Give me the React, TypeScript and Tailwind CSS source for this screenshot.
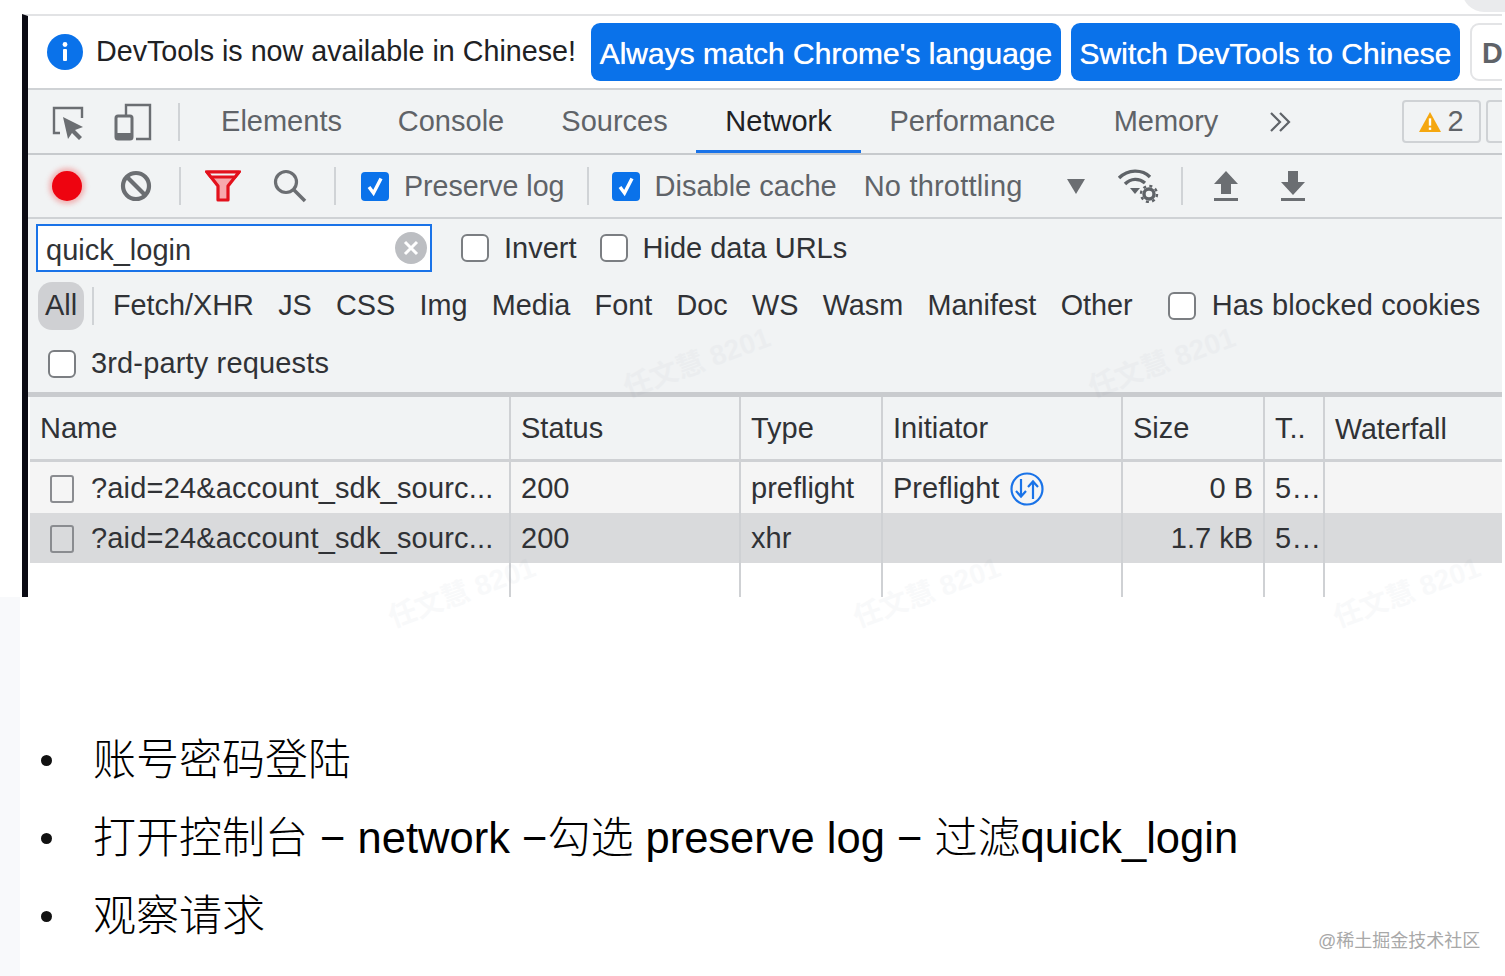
import React from "react";

const sans = "font-['Liberation_Sans',Arial,'Noto_Sans_CJK_SC',sans-serif]";

function Check({ on = false, className = "" }: { on?: boolean; className?: string }) {
  return on ? (
    <span className={`flex h-[29px] w-[28px] shrink-0 items-center justify-center rounded-[4px] bg-[#0a72ea] ${className}`}>
      <svg width="18" height="22" viewBox="0 0 18 22" fill="none">
        <path d="M3 12 L7.5 18 L15 3.5" stroke="white" strokeWidth="3.4" />
      </svg>
    </span>
  ) : (
    <span className={`block h-[28px] w-[28px] shrink-0 rounded-[6px] border-2 border-[#7b7e82] bg-white ${className}`} />
  );
}

function Divider({ className = "" }: { className?: string }) {
  return <span className={`block h-[38px] w-[2px] shrink-0 bg-[#d0d3d6] ${className}`} />;
}

function Tab({ label, active = false, w }: { label: string; active?: boolean; w: string }) {
  return (
    <div className={`flex h-full shrink-0 items-center justify-center ${w} ${active ? "border-b-[3px] border-[#1a73e8] pt-[3px] text-[#202124]" : "text-[#5f6368]"}`}>
      {label}
    </div>
  );
}

function Cell({ w, children, right = false }: { w: string; children?: React.ReactNode; right?: boolean }) {
  return (
    <div className={`flex h-full shrink-0 items-center overflow-hidden whitespace-nowrap border-r-2 border-[#cfd1d4] px-[10px] pt-[2px] ${w} ${right ? "justify-end" : ""}`}>
      {children}
    </div>
  );
}

const widths = ["w-[481px]", "w-[230px]", "w-[142px]", "w-[240px]", "w-[142px]", "w-[60px]"];

function Row({ cells, bg, h }: { cells: React.ReactNode[]; bg: string; h: string }) {
  return (
    <div className={`flex text-[#303236] ${bg} ${h}`}>
      {cells.map((c, i) => (
        <Cell key={i} w={widths[i]} right={i === 4}>{c}</Cell>
      ))}
      <div className="flex-1" />
    </div>
  );
}

function NameCell() {
  return (
    <>
      <span className="ml-[10px] mr-[17px] block h-[28px] w-[24px] shrink-0 rounded-[3px] border-2 border-[#8a8c90]" />
      <span className="tracking-[0.18px]">?aid=24&account_sdk_sourc...</span>
    </>
  );
}

function Watermark({ className }: { className: string }) {
  return (
    <span className={`pointer-events-none absolute rotate-[-20deg] whitespace-nowrap text-[28px] font-bold text-[#8a93a5] opacity-[0.05] ${className}`}>
      任文慧 8201
    </span>
  );
}

const Zh = ({ children }: { children: React.ReactNode }) => (
  <span className="text-[43px] font-light">{children}</span>
);

const Dots = () => <span className="tracking-[1.5px]">5...</span>;

export default function App() {
  return (
    <div className={`relative h-[976px] w-[1505px] overflow-hidden bg-white ${sans}`}>
      <span className="absolute left-[1462px] top-[-32px] block h-[44px] w-[70px] rounded-full bg-[#eaebed]" />
      <div className="h-[14px]" />
      <div className="relative ml-[22px] flex h-[583px] w-[1480px] flex-col overflow-hidden border-l-[6px] border-[#0b0b14] border-t-2 border-t-[#e2e3e5] text-[29px]">
        {/* info bar */}
        <div className="flex h-[72px] shrink-0 items-center bg-white pl-[19px] text-[28.7px]">
          <svg width="36" height="36" viewBox="0 0 36 36" className="mr-[13px] shrink-0">
            <circle cx="18" cy="18" r="18" fill="#0a72ea" />
            <circle cx="18" cy="10.5" r="2.4" fill="white" />
            <rect x="16" y="15" width="4" height="12" rx="1" fill="white" />
          </svg>
          <span className="whitespace-nowrap text-[#202124]">DevTools is now available in Chinese!</span>
          <span className="ml-[15px] flex h-[58px] w-[470px] shrink-0 items-center justify-center rounded-[9px] bg-[#0a72ea] pt-[3px] text-[30px] whitespace-nowrap text-white [text-shadow:0_0_0.7px_white]">Always match Chrome's language</span>
          <span className="ml-[10px] flex h-[58px] w-[389px] shrink-0 items-center justify-center rounded-[9px] bg-[#0a72ea] pt-[3px] text-[30px] whitespace-nowrap text-white [text-shadow:0_0_0.7px_white]">Switch DevTools to Chinese</span>
          <span className="ml-[10px] flex h-[58px] w-[60px] shrink-0 items-center rounded-[9px] border-2 border-[#e3e4e6] pl-[10px] pt-[3px] font-bold text-[#5f6368]">D</span>
        </div>

        {/* tabs */}
        <div className="flex h-[67px] shrink-0 items-center border-y-2 border-[#cfd2d5] bg-[#f1f3f4] border-b-[#c7cacd]">
          <svg width="34" height="34" viewBox="0 0 34 34" fill="none" className="ml-[24px] mt-[2px] shrink-0">
            <path d="M8 27 H2 V2 H30 V12" stroke="#6b6e72" strokeWidth="2.4" />
            <path d="M11 11 L31 21 L23 24 L30 31 L27 34 L20 27 L16 33 Z" fill="#6b6e72" />
          </svg>
          <svg width="38" height="38" viewBox="0 0 38 38" fill="none" className="ml-[28px] shrink-0">
            <path d="M12 13 V2 H36 V36 H22" stroke="#6b6e72" strokeWidth="2.4" />
            <rect x="2" y="13" width="16" height="23" rx="2" stroke="#6b6e72" strokeWidth="3" />
            <rect x="2" y="30" width="16" height="6" fill="#6b6e72" />
          </svg>
          <Divider className="ml-[26px]" />
          <div className="ml-[14px] flex h-full">
            <Tab label="Elements" w="w-[175px]" />
            <Tab label="Console" w="w-[164px]" />
            <Tab label="Sources" w="w-[163px]" />
            <Tab label="Network" active w="w-[165px]" />
            <Tab label="Performance" w="w-[223px]" />
            <Tab label="Memory" w="w-[164px]" />
          </div>
          <svg width="22" height="22" viewBox="0 0 22 22" fill="none" className="ml-[21px] shrink-0" stroke="#5f6368" strokeWidth="2.2">
            <path d="M2 2 L11 11 L2 20" />
            <path d="M11 2 L20 11 L11 20" />
          </svg>
          <div className="ml-[111px] flex h-[43px] w-[79px] shrink-0 items-center justify-center gap-[6px] rounded-[4px] border-2 border-[#cfd2d5] text-[#5f6368]">
            <svg width="22" height="22" viewBox="0 0 24 24">
              <path d="M12 1 L24 23 H0 Z" fill="#f5a70f" />
              <rect x="10.7" y="8" width="2.6" height="8" fill="#fff" />
              <rect x="10.7" y="18" width="2.6" height="2.6" fill="#fff" />
            </svg>
            2
          </div>
          <div className="ml-[5px] h-[43px] w-[20px] shrink-0 rounded-l-[4px] border-2 border-[#cfd2d5]" />
        </div>

        {/* network toolbar */}
        <div className="flex h-[64px] shrink-0 items-center border-b-2 border-[#cfd2d5] bg-[#f1f3f4] text-[#5f6368]">
          <span className="ml-[24px] block h-[30px] w-[30px] shrink-0 rounded-full bg-[#ee0410] shadow-[0_0_5px_3px_rgba(240,60,60,0.35)]" />
          <svg width="32" height="32" viewBox="0 0 32 32" fill="none" stroke="#6b6e72" strokeWidth="4.2" className="ml-[38px] shrink-0">
            <circle cx="16" cy="16" r="13" />
            <path d="M7 7 L25 25" />
          </svg>
          <Divider className="ml-[27px]" />
          <svg width="36" height="32" viewBox="0 0 36 32" className="ml-[24px] shrink-0">
            <path d="M2 2 H34 L23 16 V30 H13 V16 Z" fill="#f7a9ad" stroke="#e3111c" strokeWidth="3.2" strokeLinejoin="round" />
            <path d="M2 2 H34 L30 7 H6 Z" fill="#f1f3f4" stroke="#e3111c" strokeWidth="3" />
          </svg>
          <svg width="34" height="34" viewBox="0 0 34 34" fill="none" stroke="#6b6e72" strokeWidth="3.2" className="ml-[32px] shrink-0">
            <circle cx="13" cy="13" r="10.5" />
            <path d="M20.5 20.5 L32 32" strokeWidth="3.6" />
          </svg>
          <Divider className="ml-[27px]" />
          <Check on className="ml-[25px]" />
          <span className="ml-[15px] pt-[1px] text-[28.6px] whitespace-nowrap">Preserve log</span>
          <Divider className="ml-[22px]" />
          <Check on className="ml-[23px]" />
          <span className="ml-[15px] pt-[1px] whitespace-nowrap">Disable cache</span>
          <span className="ml-[27px] pt-[1px] whitespace-nowrap tracking-[0.2px]">No throttling</span>
          <svg width="18" height="15" viewBox="0 0 18 15" className="ml-[44px] shrink-0">
            <path d="M0 0 H18 L9 15 Z" fill="#6b6e72" />
          </svg>
          <svg width="42" height="34" viewBox="0 0 42 34" className="ml-[32px] shrink-0" fill="none">
            <path d="M2 9 C11 0 25 0 33 8" stroke="#5f6368" strokeWidth="3.4" />
            <path d="M8 15 C14 9 22 9 28 14" stroke="#5f6368" strokeWidth="3.4" />
            <path d="M13 19 H23 L18 25 Z" fill="#5f6368" />
            <circle cx="32" cy="25" r="5" stroke="#5f6368" strokeWidth="3.4" />
            <circle cx="32" cy="25" r="8" stroke="#5f6368" strokeWidth="2.4" strokeDasharray="3 3.3" />
          </svg>
          <Divider className="ml-[22px]" />
          <svg width="26" height="32" viewBox="0 0 26 32" className="ml-[30px] shrink-0">
            <path d="M13 1 L25 14 H18 V24 H8 V14 H1 Z" fill="#6b6e72" />
            <rect x="1" y="28" width="24" height="3" fill="#6b6e72" />
          </svg>
          <svg width="26" height="32" viewBox="0 0 26 32" className="ml-[41px] shrink-0">
            <path d="M8 1 H18 V12 H25 L13 25 L1 12 H8 Z" fill="#6b6e72" />
            <rect x="1" y="28" width="24" height="3" fill="#6b6e72" />
          </svg>
        </div>

        {/* filters */}
        <div className="flex h-[178px] shrink-0 flex-col border-b-[5px] border-[#c9cbce] bg-[#f1f3f4] text-[#303236]">
          <div className="flex h-[58px] shrink-0 items-center pl-[8px]">
            <div className="flex h-[48px] w-[396px] shrink-0 items-center justify-between border-2 border-[#1a73e8] bg-white pl-[8px] pr-[3px] text-[#303236]">
              <span className="pt-[5px]">quick_login</span>
              <span className="flex h-[32px] w-[32px] items-center justify-center rounded-full bg-[#bcbec2]">
                <svg width="18" height="18" viewBox="0 0 18 18" stroke="white" strokeWidth="3"><path d="M3 3 L15 15 M15 3 L3 15" /></svg>
              </span>
            </div>
            <Check className="ml-[29px]" />
            <span className="ml-[15px] pt-[2px]">Invert</span>
            <Check className="ml-[23px]" />
            <span className="ml-[15px] pt-[2px]">Hide data URLs</span>
          </div>
          <div className="flex h-[58px] shrink-0 items-center pl-[10px]">
            <span className="flex h-[48px] w-[46px] shrink-0 items-center justify-center rounded-[14px] bg-[#cfd0d3]">All</span>
            <span className="ml-[8px] block h-[38px] w-[2px] bg-[#d0d3d6]" />
            <div className="ml-[19px] flex gap-[24.3px] whitespace-nowrap text-[28.8px]">
              <span>Fetch/XHR</span><span>JS</span><span>CSS</span><span>Img</span><span>Media</span><span>Font</span><span>Doc</span><span>WS</span><span>Wasm</span><span>Manifest</span><span>Other</span>
            </div>
            <Check className="ml-[35px]" />
            <span className="ml-[16px] whitespace-nowrap tracking-[0.15px]">Has blocked cookies</span>
          </div>
          <div className="flex flex-1 items-center pl-[20px]">
            <Check />
            <span className="ml-[15px] tracking-[0.15px]">3rd-party requests</span>
          </div>
        </div>

        {/* table */}
        <div className="ml-[2px] flex flex-1 flex-col bg-white">
          <div className="flex h-[65px] shrink-0 border-b-[3px] border-[#cfd1d4] bg-[#f1f3f4] text-[#303236]">
            {["Name", "Status", "Type", "Initiator", "Size", "T.."].map((h, i) => (
              <Cell key={h} w={widths[i]}>{h}</Cell>
            ))}
            <div className="flex items-center pl-[10px] pt-[2px] text-[28.6px]">Waterfall</div>
          </div>
          <Row
            h="h-[51px]"
            bg="bg-[#f5f5f5]"
            cells={[
              <NameCell />,
              "200",
              "preflight",
              <>
                Preflight
                <svg width="36" height="36" viewBox="0 0 36 36" fill="none" stroke="#1a73e8" strokeWidth="2.2" className="ml-[10px] shrink-0">
                  <circle cx="18" cy="18" r="15.5" />
                  <path d="M12 8 V25 M7 20 L12 25.5 L17 20" />
                  <path d="M24 28 V11 M19 16 L24 10.5 L29 16" />
                </svg>
              </>,
              "0 B",
              <Dots />,
            ]}
          />
          <Row h="h-[50px]" bg="bg-[#d9dadc]" cells={[<NameCell />, "200", "xhr", "", "1.7 kB", <Dots />]} />
          <Row h="flex-1" bg="bg-white" cells={["", "", "", "", "", ""]} />
        </div>
      </div>

      {/* notes */}
      <div className="flex h-[379px]">
        <div className="w-[20px] shrink-0 bg-[#f8f9fb]" />
        <ul className="flex flex-col gap-[22px] pl-[21px] pt-[135px] text-[43.5px] leading-[56px] text-black">
          <li className="flex items-center whitespace-nowrap">
            <span className="mr-[41px] block h-[11px] w-[11px] shrink-0 rounded-full bg-[#111]" />
            <Zh>账号密码登陆</Zh>
          </li>
          <li className="flex items-center whitespace-pre">
            <span className="mr-[41px] block h-[11px] w-[11px] shrink-0 rounded-full bg-[#111]" />
            <Zh>打开控制台</Zh>
            {" − network −"}
            <Zh>勾选</Zh>
            {" preserve log − "}
            <Zh>过滤</Zh>
            {"quick_login"}
          </li>
          <li className="flex items-center whitespace-nowrap">
            <span className="mr-[41px] block h-[11px] w-[11px] shrink-0 rounded-full bg-[#111]" />
            <Zh>观察请求</Zh>
          </li>
        </ul>
      </div>

      <Watermark className="left-[620px] top-[342px]" />
      <Watermark className="left-[1085px] top-[342px]" />
      <Watermark className="left-[385px] top-[572px]" />
      <Watermark className="left-[850px] top-[572px]" />
      <Watermark className="left-[1330px] top-[572px]" />
      <span className="absolute left-[1318px] top-[928px] whitespace-nowrap text-[18px] text-[#a8a8a8]">@稀土掘金技术社区</span>
    </div>
  );
}
